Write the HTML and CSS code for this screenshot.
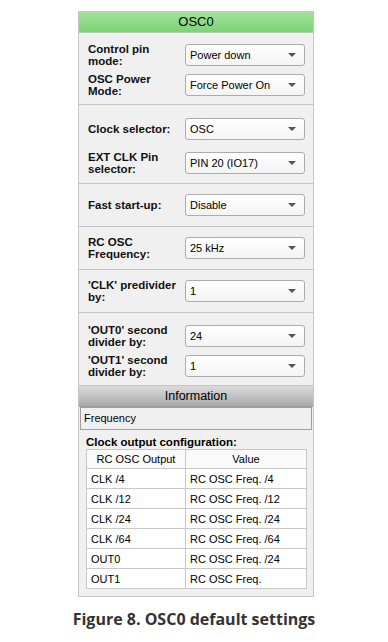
FILE: index.html
```html
<!DOCTYPE html>
<html lang="en">
<head>
    <meta charset="UTF-8">
    <meta name="viewport" content="width=device-width, initial-scale=1.0">
    <title>OSC0 default settings</title>
    <link rel="stylesheet" href="styles.css">
</head>
<body>
    <div class="panel">
        <div class="title">OSC0</div>

        <!-- Power -->
        <div class="section s1">
            <div class="row">
                <div class="label">Control pin<br>mode:</div>
                <div class="select"><span>Power down</span><i class="arrow"></i></div>
            </div>
            <div class="row">
                <div class="label">OSC Power<br>Mode:</div>
                <div class="select"><span>Force Power On</span><i class="arrow"></i></div>
            </div>
        </div>

        <!-- Clock source -->
        <div class="section s2">
            <div class="row">
                <div class="label">Clock selector:</div>
                <div class="select"><span>OSC</span><i class="arrow"></i></div>
            </div>
            <div class="row">
                <div class="label">EXT CLK Pin<br>selector:</div>
                <div class="select"><span>PIN 20 (IO17)</span><i class="arrow"></i></div>
            </div>
        </div>

        <div class="section single">
            <div class="row">
                <div class="label">Fast start-up:</div>
                <div class="select"><span>Disable</span><i class="arrow"></i></div>
            </div>
        </div>

        <div class="section single">
            <div class="row">
                <div class="label">RC OSC<br>Frequency:</div>
                <div class="select"><span>25 kHz</span><i class="arrow"></i></div>
            </div>
        </div>

        <div class="section single">
            <div class="row">
                <div class="label">'CLK' predivider<br>by:</div>
                <div class="select"><span>1</span><i class="arrow"></i></div>
            </div>
        </div>

        <!-- Dividers -->
        <div class="section s6">
            <div class="row">
                <div class="label">'OUT0' second<br>divider by:</div>
                <div class="select"><span>24</span><i class="arrow"></i></div>
            </div>
            <div class="row">
                <div class="label">'OUT1' second<br>divider by:</div>
                <div class="select"><span>1</span><i class="arrow"></i></div>
            </div>
        </div>

        <div class="info-title">Information</div>
        <div class="freq">Frequency</div>

        <div class="clock">
            <div class="clock-label">Clock output configuration:</div>
            <table class="out-table">
                <tr><th>RC OSC Output</th><th>Value</th></tr>
                <tr><td>CLK /4</td><td>RC OSC Freq. /4</td></tr>
                <tr><td>CLK /12</td><td>RC OSC Freq. /12</td></tr>
                <tr><td>CLK /24</td><td>RC OSC Freq. /24</td></tr>
                <tr><td>CLK /64</td><td>RC OSC Freq. /64</td></tr>
                <tr><td>OUT0</td><td>RC OSC Freq. /24</td></tr>
                <tr><td>OUT1</td><td>RC OSC Freq.</td></tr>
            </table>
        </div>
    </div>

    <p class="caption">Figure 8. OSC0 default settings</p>
</body>
</html>
```

FILE: styles.css
```css
body {
    margin: 0;
    padding: 0;
    background-color: #fff;
    font-family: "Liberation Sans", Arial, sans-serif;
    color: #000;
}
.panel {
    width: 234px;
    margin: 11px 0 0 78px;
    background-color: #f0f0f0;
    border: 1px solid #c6c6c6;
    border-top: none;
}
.title {
    height: 21px;
    line-height: 21px;
    text-align: center;
    font-size: 13px;
    background: linear-gradient(#a3e39c, #7ed277);
    border-bottom: 1px solid #b9c9b6;
}
.section {
    border-bottom: 1px solid #c4c4c4;
    padding: 0 0 0 9px;
}
.s1 {
    padding-top: 10px;
    padding-bottom: 7px;
}
.s2 {
    padding-top: 12px;
    padding-bottom: 8px;
}
.s6 {
    padding-top: 11px;
    padding-bottom: 7px;
}
.single {
    padding-top: 9px;
    padding-bottom: 9px;
}
.s1 .row + .row {
    margin-top: 6px;
}
.s2 .row + .row {
    margin-top: 10px;
}
.s6 .row + .row {
    margin-top: 6px;
}
.row {
    display: flex;
    align-items: center;
    height: 24px;
}
.label {
    width: 97px;
    font-size: 11.5px;
    font-weight: bold;
    line-height: 12px;
    color: #111;
}
.select {
    box-sizing: border-box;
    width: 120px;
    height: 22px;
    display: flex;
    align-items: center;
    justify-content: space-between;
    padding: 0 8px 0 4px;
    font-size: 11px;
    background: linear-gradient(#ffffff, #f4f4f4);
    border: 1px solid #acacac;
    border-radius: 3px;
}
.arrow {
    width: 0;
    height: 0;
    border-left: 4px solid transparent;
    border-right: 4px solid transparent;
    border-top: 4px solid #555;
}
.info-title {
    height: 20px;
    line-height: 20px;
    text-align: center;
    font-size: 12.5px;
    background: linear-gradient(#dcdcdc, #a9a9a9);
    border-bottom: 1px solid #9a9a9a;
}
.freq {
    height: 21px;
    line-height: 21px;
    margin: 0 1px;
    padding-left: 3px;
    font-size: 11px;
    border: 1px solid #a0a0a0;
    background-color: #f0f0f0;
}
.clock {
    padding: 5px 6px 7px 7px;
}
.clock-label {
    font-size: 11.5px;
    font-weight: bold;
    height: 14px;
    line-height: 14px;
}
.out-table {
    width: 221px;
    border-collapse: collapse;
    background-color: #fff;
    border: 1px solid #a8a8a8;
    font-size: 11px;
}
.out-table th {
    height: 18px;
    font-weight: normal;
    text-align: center;
    border: 1px solid #c8c8c8;
    background-color: #fafafa;
    padding: 0;
}
.out-table td {
    height: 19px;
    padding: 0 0 0 4px;
    border: 1px solid #c8c8c8;
}
.out-table th:first-child,
.out-table td:first-child {
    width: 94px;
}
.caption {
    margin: 11px 0 0 0;
    text-align: center;
    font-family: "Open Sans", sans-serif;
    font-weight: bold;
    font-size: 16px;
    color: #333;
}
```
